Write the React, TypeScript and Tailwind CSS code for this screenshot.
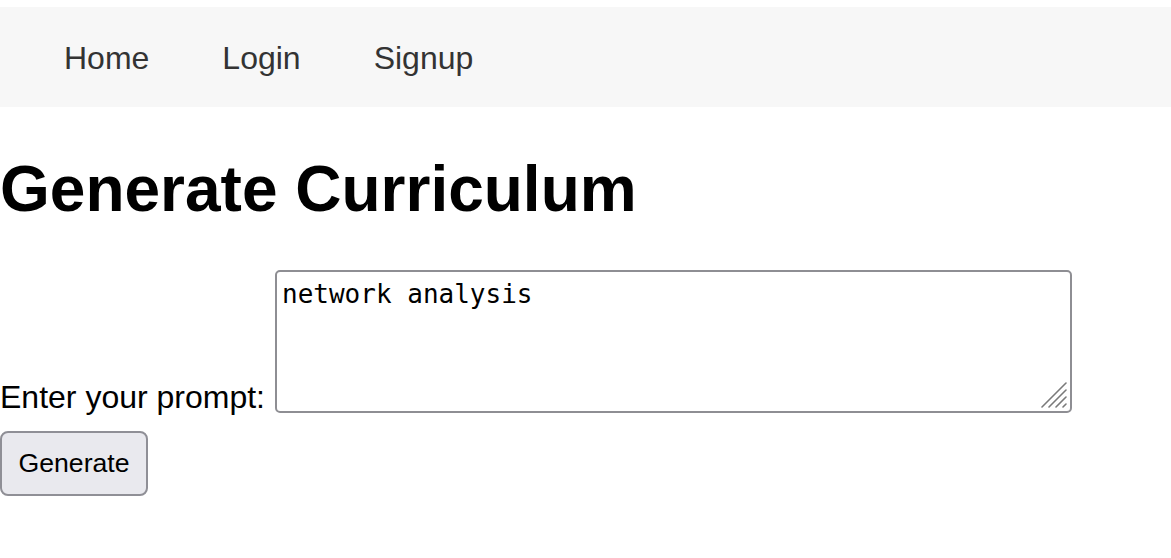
import React from "react";

export default function App() {
  return (
    <div className="min-h-[558px] bg-white pt-[7px] text-black" style={{ fontFamily: '"Liberation Sans", Arial, sans-serif' }}>
      <nav className="flex h-[100px] items-center gap-[73px] bg-[#f7f7f7] pl-[64px] text-[32px] leading-none text-[#333333]">
        <a href="#" className="mt-[2px]">Home</a>
        <a href="#" className="mt-[2px]">Login</a>
        <a href="#" className="mt-[2px]">Signup</a>
      </nav>
      <h1 className="mt-[45px] text-[64px] font-bold leading-[74px]">Generate Curriculum</h1>
      <form className="mt-[44px] flex flex-col items-start" onSubmit={(e) => e.preventDefault()}>
        <div className="flex items-end">
          <label htmlFor="prompt" className="mb-[0px] text-[32px] leading-[32px]">
            Enter your prompt:
          </label>
          <div className="relative ml-[10px]">
            <textarea
              id="prompt"
              defaultValue="network analysis"
              className="block h-[143px] w-[797px] resize-none rounded-[5px] border-2 border-[#8e8e93] bg-white px-[5px] pt-[7px] text-[26px] leading-[30px] text-black outline-none"
              style={{ fontFamily: '"DejaVu Sans Mono", "Liberation Mono", monospace' }}
            />
            <svg
              className="pointer-events-none absolute bottom-[5px] right-[5px]"
              width="26"
              height="26"
              viewBox="0 0 26 26"
              stroke="#7a7a7a"
              strokeWidth="1.6"
              strokeLinecap="round"
            >
              <line x1="1" y1="25" x2="25" y2="1" />
              <line x1="8" y1="25" x2="25" y2="8" />
              <line x1="15" y1="25" x2="25" y2="15" />
              <line x1="22" y1="25" x2="25" y2="22" />
            </svg>
          </div>
        </div>
        <button
          type="submit"
          className="mt-[18px] flex h-[65px] w-[148px] items-center justify-center rounded-[8px] border-2 border-[#8f8f96] bg-[#e9e9ee] text-[26.67px] leading-none text-black"
        >
          Generate
        </button>
      </form>
    </div>
  );
}
